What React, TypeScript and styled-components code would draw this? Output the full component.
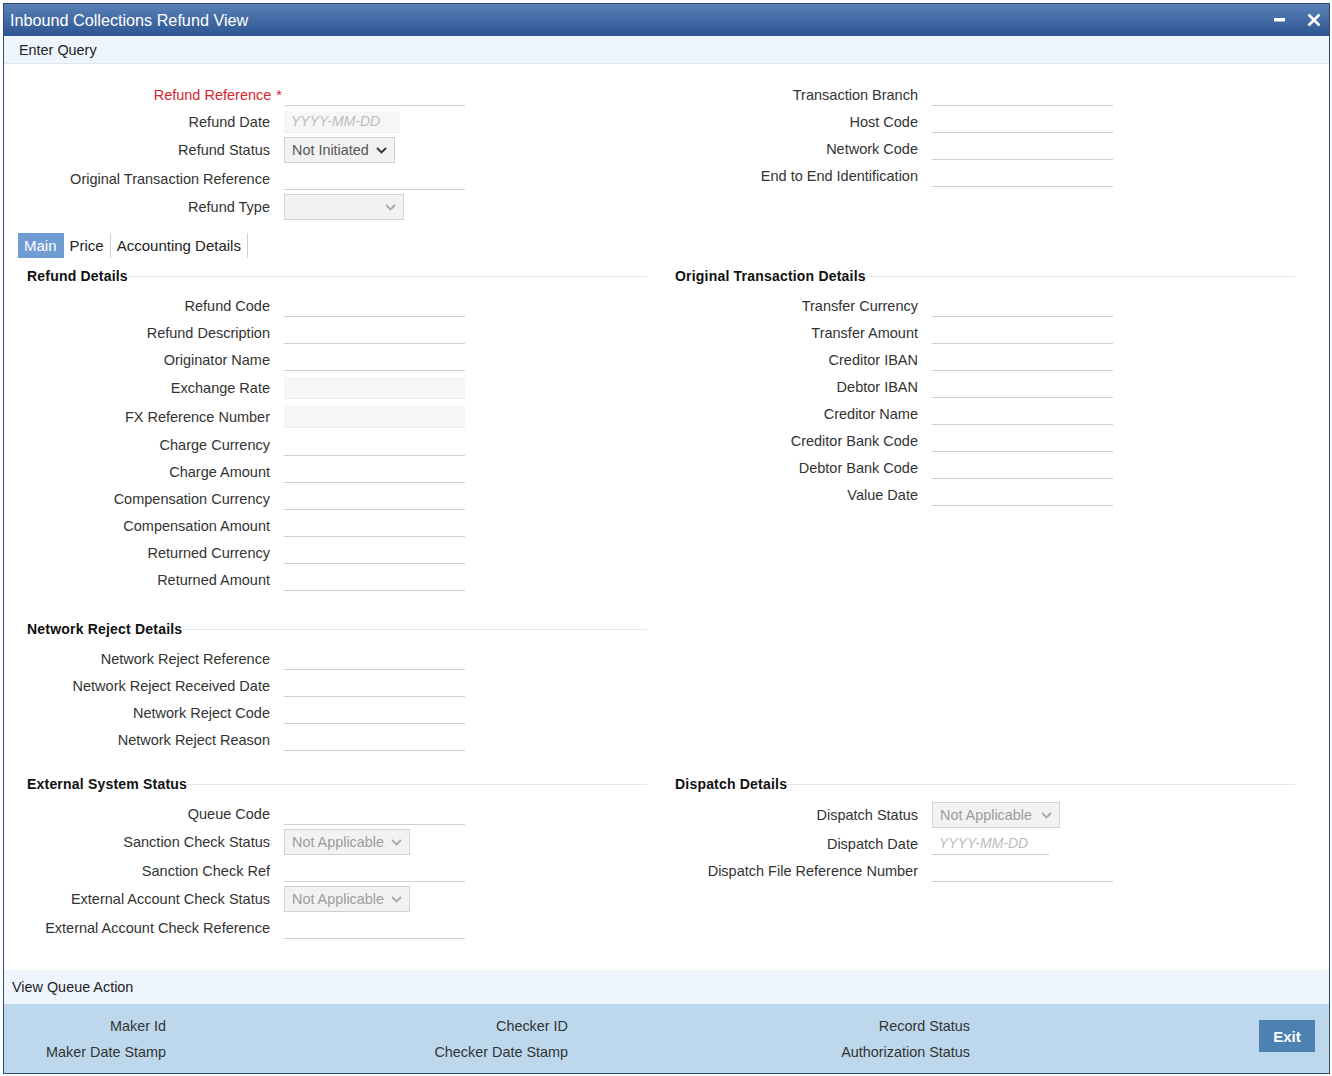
import React from "react";
import styled, { createGlobalStyle } from "styled-components";

const GlobalStyle = createGlobalStyle`
  body {
    margin: 0;
    background: #ffffff;
    font-family: "Liberation Sans", Arial, sans-serif;
    color: #333;
  }
`;

const Window = styled.div`
  box-sizing: border-box;
  margin: 3px 0 0 3px;
  width: 1327px;
  height: 1071px;
  border: 1px solid #2e4b78;
  display: flex;
  flex-direction: column;
  background: #fff;
`;

const TitleBar = styled.div`
  height: 32px;
  flex-shrink: 0;
  display: flex;
  align-items: center;
  justify-content: space-between;
  padding: 0 8px 0 6px;
  background: linear-gradient(#5a80b6, #2d5592);
  color: #fff;
  font-size: 16.2px;
`;

const WinControls = styled.div`
  display: flex;
  align-items: center;
  gap: 22px;
`;

const Toolbar = styled.div`
  height: 27px;
  flex-shrink: 0;
  display: flex;
  align-items: center;
  padding-left: 15px;
  background: #eef5fd;
  border-bottom: 1px solid #dfe7ef;
  font-size: 14.4px;
  color: #222;
`;

const Body = styled.div`
  flex: 1;
  padding-top: 17px;
`;

const Columns = styled.div<{ $top?: number }>`
  display: grid;
  grid-template-columns: 648px 648px;
  margin-top: ${({ $top }) => $top ?? 0}px;
`;

const Column = styled.div`
  display: flex;
  flex-direction: column;
`;

const Row = styled.div<{ $h?: number }>`
  display: flex;
  align-items: center;
  height: ${({ $h }) => $h ?? 27}px;
  gap: 14px;
`;

const Label = styled.div<{ $required?: boolean }>`
  width: 266px;
  flex-shrink: 0;
  text-align: right;
  font-size: 14.5px;
  color: ${({ $required }) => ($required ? "#d7262f" : "#333")};
  white-space: nowrap;
`;

const Req = styled.span`
  margin-left: 5px;
  margin-right: -12px;
  color: #d7262f;
`;

const TextField = styled.div<{ $w?: number; $filled?: boolean }>`
  box-sizing: border-box;
  width: ${({ $w }) => $w ?? 181}px;
  height: 22px;
  display: flex;
  align-items: center;
  padding-left: 7px;
  background: ${({ $filled }) => ($filled ? "#f6f6f6" : "transparent")};
  border-bottom: 1px solid ${({ $filled }) => ($filled ? "#ececec" : "#cfcfcf")};
`;

const Placeholder = styled.span`
  font-size: 14px;
  font-style: italic;
  color: #bcbcbc;
`;

const Select = styled.div<{ $w: number; $muted?: boolean }>`
  box-sizing: border-box;
  width: ${({ $w }) => $w}px;
  height: 26px;
  display: flex;
  align-items: center;
  justify-content: space-between;
  padding: 0 7px 0 7px;
  background: #f2f2f2;
  border: 1px solid #d2d2d2;
  font-size: 14.4px;
  color: ${({ $muted }) => ($muted ? "#9c9c9c" : "#555")};
`;

const TabBar = styled.div`
  display: flex;
  height: 25px;
  margin: 11px 0 0 14px;
`;

const Tab = styled.div<{ $active?: boolean }>`
  display: flex;
  align-items: center;
  padding: 0 6px;
  font-size: 15px;
  color: ${({ $active }) => ($active ? "#fff" : "#222")};
  background: ${({ $active }) => ($active ? "#6f9cd3" : "transparent")};
  border-right: 1px solid ${({ $active }) => ($active ? "transparent" : "#d0d0d0")};
`;

const SectionHead = styled.div<{ $top?: number }>`
  display: flex;
  align-items: center;
  height: 20px;
  margin: ${({ $top }) => $top ?? 8}px 5px 6px 23px;
  font-size: 14px;
  font-weight: bold;
  color: #111;
  letter-spacing: 0.2px;

  &::after {
    content: "";
    flex: 1;
    height: 1px;
    background: #e8e8e8;
  }
`;

const QueueBar = styled.div`
  height: 34px;
  flex-shrink: 0;
  display: flex;
  align-items: center;
  padding-left: 8px;
  background: #eef5fd;
  font-size: 14.4px;
  color: #222;
`;

const AuditBand = styled.div`
  height: 69px;
  box-sizing: border-box;
  flex-shrink: 0;
  display: flex;
  background: #bdd8ec;
  padding-top: 9px;
`;

const AuditGroup = styled.div`
  width: 402px;
  display: flex;
  flex-direction: column;
`;

const AuditLabel = styled.div`
  width: 162px;
  height: 26px;
  line-height: 26px;
  text-align: right;
  font-size: 14.4px;
  color: #333;
  white-space: nowrap;
`;

const ExitButton = styled.button`
  margin: 7px 14px 0 auto;
  width: 56px;
  height: 32px;
  border: none;
  background: #4d81b2;
  color: #fff;
  font-family: "Liberation Sans", Arial, sans-serif;
  font-weight: bold;
  font-size: 15px;
`;

const Chevron = ({ color }: { color: string }) => (
  <svg width="11" height="7" viewBox="0 0 11 7">
    <path d="M1 1 L5.5 5.5 L10 1" fill="none" stroke={color} strokeWidth="1.8" />
  </svg>
);

type Field =
  | { label: string; kind?: "text" | "filled"; required?: boolean }
  | { label: string; kind: "date"; w: number; filled?: boolean }
  | { label: string; kind: "select"; w: number; value?: string; muted?: boolean };

const FieldRow = ({ f }: { f: Field }) => {
  if (f.kind === "select") {
    return (
      <Row $h={30}>
        <Label>{f.label}</Label>
        <Select $w={f.w} $muted={f.muted}>
          <span>{f.value ?? ""}</span>
          <Chevron color={f.muted ? "#a8a8a8" : "#333"} />
        </Select>
      </Row>
    );
  }
  if (f.kind === "date") {
    return (
      <Row>
        <Label>{f.label}</Label>
        <TextField $w={f.w} $filled={f.filled}>
          <Placeholder>YYYY-MM-DD</Placeholder>
        </TextField>
      </Row>
    );
  }
  const required = "required" in f && f.required;
  return (
    <Row $h={f.kind === "filled" ? 29 : 27}>
      <Label $required={required}>
        {f.label}
        {required && <Req>*</Req>}
      </Label>
      <TextField $filled={f.kind === "filled"} />
    </Row>
  );
};

const headerLeft: Field[] = [
  { label: "Refund Reference", required: true },
  { label: "Refund Date", kind: "date", w: 116, filled: true },
  { label: "Refund Status", kind: "select", w: 111, value: "Not Initiated" },
  { label: "Original Transaction Reference" },
  { label: "Refund Type", kind: "select", w: 120, muted: true },
];

const headerRight: Field[] = [
  { label: "Transaction Branch" },
  { label: "Host Code" },
  { label: "Network Code" },
  { label: "End to End Identification" },
];

const refundDetails: Field[] = [
  { label: "Refund Code" },
  { label: "Refund Description" },
  { label: "Originator Name" },
  { label: "Exchange Rate", kind: "filled" },
  { label: "FX Reference Number", kind: "filled" },
  { label: "Charge Currency" },
  { label: "Charge Amount" },
  { label: "Compensation Currency" },
  { label: "Compensation Amount" },
  { label: "Returned Currency" },
  { label: "Returned Amount" },
];

const networkReject: Field[] = [
  { label: "Network Reject Reference" },
  { label: "Network Reject Received Date" },
  { label: "Network Reject Code" },
  { label: "Network Reject Reason" },
];

const originalTxn: Field[] = [
  { label: "Transfer Currency" },
  { label: "Transfer Amount" },
  { label: "Creditor IBAN" },
  { label: "Debtor IBAN" },
  { label: "Creditor Name" },
  { label: "Creditor Bank Code" },
  { label: "Debtor Bank Code" },
  { label: "Value Date" },
];

const externalStatus: Field[] = [
  { label: "Queue Code" },
  { label: "Sanction Check Status", kind: "select", w: 126, value: "Not Applicable", muted: true },
  { label: "Sanction Check Ref" },
  { label: "External Account Check Status", kind: "select", w: 126, value: "Not Applicable", muted: true },
  { label: "External Account Check Reference" },
];

const dispatch: Field[] = [
  { label: "Dispatch Status", kind: "select", w: 128, value: "Not Applicable", muted: true },
  { label: "Dispatch Date", kind: "date", w: 117 },
  { label: "Dispatch File Reference Number" },
];

const audit = [
  ["Maker Id", "Maker Date Stamp"],
  ["Checker ID", "Checker Date Stamp"],
  ["Record Status", "Authorization Status"],
];

const renderRows = (fields: Field[]) =>
  fields.map((f) => <FieldRow key={f.label} f={f} />);

const App = () => {
  return (
    <>
      <GlobalStyle />
      <Window>
        <TitleBar>
          <span>Inbound Collections Refund View</span>
          <WinControls>
            <svg width="11" height="4" viewBox="0 0 11 4">
              <rect x="0" y="0" width="11" height="3.5" fill="#fff" />
            </svg>
            <svg width="14" height="14" viewBox="0 0 14 14">
              <path d="M1.5 1.5 L12.5 12.5 M12.5 1.5 L1.5 12.5" stroke="#fff" strokeWidth="2.6" />
            </svg>
          </WinControls>
        </TitleBar>
        <Toolbar>Enter Query</Toolbar>
        <Body>
          <Columns>
            <Column>{renderRows(headerLeft)}</Column>
            <Column>{renderRows(headerRight)}</Column>
          </Columns>
          <TabBar>
            <Tab $active>Main</Tab>
            <Tab>Price</Tab>
            <Tab>Accounting Details</Tab>
          </TabBar>
          <Columns>
            <Column>
              <SectionHead>Refund Details</SectionHead>
              {renderRows(refundDetails)}
              <SectionHead $top={26}>Network Reject Details</SectionHead>
              {renderRows(networkReject)}
            </Column>
            <Column>
              <SectionHead>Original Transaction Details</SectionHead>
              {renderRows(originalTxn)}
            </Column>
          </Columns>
          <Columns $top={13}>
            <Column>
              <SectionHead>External System Status</SectionHead>
              {renderRows(externalStatus)}
            </Column>
            <Column>
              <SectionHead>Dispatch Details</SectionHead>
              {renderRows(dispatch)}
            </Column>
          </Columns>
        </Body>
        <QueueBar>View Queue Action</QueueBar>
        <AuditBand>
          {audit.map((g) => (
            <AuditGroup key={g[0]}>
              {g.map((l) => (
                <AuditLabel key={l}>{l}</AuditLabel>
              ))}
            </AuditGroup>
          ))}
          <ExitButton>Exit</ExitButton>
        </AuditBand>
      </Window>
    </>
  );
};

export default App;
